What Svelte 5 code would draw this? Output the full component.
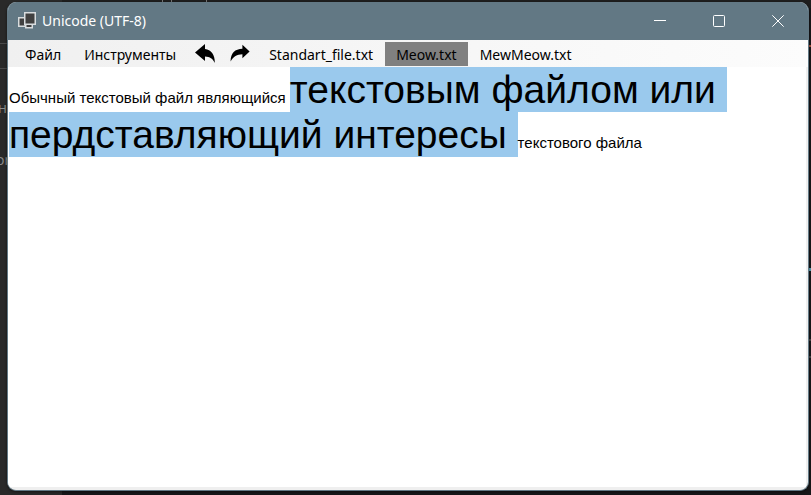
<script>
  const tabs = ['Standart_file.txt', 'Meow.txt', 'MewMeow.txt'];
  let active = $state('Meow.txt');
</script>

<div class="desktop">
  <div class="behind" aria-hidden="true">
    <i class="strip"></i>
    <i class="rule upper"></i>
    <i class="rule lower"></i>
    <i class="tick one"></i>
    <i class="tick two"></i>
    <i class="tick three"></i>
    <span class="code first">ны</span>
    <span class="code second">or</span>
    <i class="mark red"></i>
    <i class="mark blue"></i>
    <i class="mark low"></i>
    <i class="mark lower-low"></i>
  </div>

  <main class="window">
    <header>
      <svg class="app" viewBox="0 0 18 18" aria-hidden="true">
        <rect x="0.75" y="5.75" width="6.5" height="8.5" />
        <rect x="7.75" y="10.75" width="6.5" height="5" />
        <rect x="6.75" y="0.75" width="10.5" height="11.5" />
      </svg>
      <h1>Unicode (UTF-8)</h1>
      <div class="controls">
        <button aria-label="Свернуть">
          <svg viewBox="0 0 12 12"><path d="M0 5.5H12" /></svg>
        </button>
        <button aria-label="Развернуть">
          <svg viewBox="0 0 12 12"><rect x="0.5" y="0.5" width="11" height="11" rx="1" /></svg>
        </button>
        <button aria-label="Закрыть">
          <svg viewBox="0 0 12 12"><path d="M0.3 0.3L11.7 11.7M11.7 0.3L0.3 11.7" /></svg>
        </button>
      </div>
    </header>

    <nav>
      <button class="item">Файл</button>
      <button class="item">Инструменты</button>
      <button class="icon" aria-label="Отменить">
        <svg viewBox="0 0 20 20">
          <path d="M0 8.4L10 0V5C16 6 20 10 19.8 19C17.8 14.5 15 12.5 10 12.4V17Z" />
        </svg>
      </button>
      <button class="icon" aria-label="Повторить">
        <svg viewBox="0 0 20 20">
          <path d="M19.6 7.4L12.4 0.8V4.8C5 5 0.6 9 0.6 17.6C3.4 12.3 7 10.4 12.4 10.3V14.2Z" />
        </svg>
      </button>
      {#each tabs as tab}
        <button class="item" class:active={tab === active} onclick={() => (active = tab)}>{tab}</button>
      {/each}
    </nav>

    <div class="editor" role="textbox" tabindex="0" aria-multiline="true" aria-label="Текст файла" contenteditable="true" spellcheck="false"><span class="small">Обычный текстовый файл являющийся{' '}</span><span class="selected">текстовым файлом или пердставляющий интересы{' '}</span><span class="small">текстового файла</span></div>
  </main>
</div>

<style>
  :global(body) {
    margin: 0;
    background: #1c1c1c;
  }
  .desktop {
    position: relative;
    box-sizing: border-box;
    display: flex;
    height: 100vh;
    padding: 2px 2px 4px 7px;
    overflow: hidden;
    background: linear-gradient(90deg, #292929 62px, #171719 62px);
  }
  .behind i,
  .behind span {
    position: absolute;
  }
  .strip {
    top: 0;
    left: 62px;
    right: 0;
    height: 8px;
    background: #1e1e1e;
  }
  .rule {
    left: 0;
    width: 8px;
    height: 1px;
    background: #4a4a4a;
  }
  .upper { top: 43px; }
  .lower { top: 68px; }
  .tick {
    top: 0;
    width: 1px;
    height: 2px;
    background: #777;
  }
  .one { left: 162px; }
  .two { left: 171px; }
  .three { left: 206px; }
  .code {
    color: #8c8c8c;
    font: 14px/16px "Open Sans", sans-serif;
  }
  .first {
    top: 100px;
    left: -2px;
  }
  .second {
    top: 152px;
    left: -4px;
  }
  .mark {
    right: 0;
    width: 2px;
    height: 2px;
    background: #444;
  }
  .red {
    top: 45px;
    background: #a5533f;
  }
  .blue {
    top: 268px;
    height: 3px;
    background: #5aa0b4;
  }
  .low { top: 339px; }
  .lower-low { top: 356px; }
  .window {
    position: relative;
    box-sizing: border-box;
    display: flex;
    flex-direction: column;
    flex: 1;
    min-width: 0;
    padding-bottom: 3px;
    overflow: hidden;
    border: 1px solid #627884;
    border-top: 0;
    border-radius: 9px;
    background: #efefef;
    box-shadow: 0 1px 3px #0008;
  }
  header {
    display: flex;
    align-items: center;
    height: 38px;
    padding: 0 1px 0 10px;
    background: #627884;
    color: #fff;
  }
  .app {
    width: 18px;
    height: 18px;
    margin-right: 6px;
    fill: #404040;
    stroke: #d8dcde;
    stroke-width: 1.5;
  }
  h1 {
    flex: 1;
    margin: 0;
    font: 14px/20px "Noto Sans", "Open Sans", sans-serif;
  }
  button {
    margin: 0;
    border: 0;
    background: none;
    color: inherit;
  }
  .controls {
    display: flex;
    height: 100%;
  }
  .controls button {
    display: grid;
    place-items: center;
    width: 59px;
    padding: 0;
  }
  .controls svg {
    width: 12px;
    height: 12px;
    fill: none;
    stroke: #fff;
    stroke-width: 1;
  }
  nav {
    display: flex;
    align-items: center;
    gap: 1px;
    height: 27px;
    padding-left: 6px;
    background: linear-gradient(90deg, #f0f0f0, #fcfcfc);
    color: #000;
  }
  .item {
    height: 24px;
    padding: 1px 11px 0;
    font: 14px/23px "Noto Sans", "Open Sans", sans-serif;
    white-space: nowrap;
  }
  .active {
    background: #808080;
  }
  .icon {
    display: grid;
    place-items: center;
    width: 34px;
    padding: 0;
  }
  .icon svg {
    width: 20px;
    height: 20px;
  }
  .editor {
    flex: 1;
    margin-right: 2px;
    padding-left: 1px;
    overflow: auto;
    outline: 0;
    background: #fff;
    color: #000;
    font: 39px/45px "Liberation Sans", Arial, sans-serif;
    white-space: pre-wrap;
  }
  .small {
    font-size: 15px;
    line-height: 18px;
  }
  .selected {
    padding: 1px 0;
    background: #9ac9ed;
  }
</style>
